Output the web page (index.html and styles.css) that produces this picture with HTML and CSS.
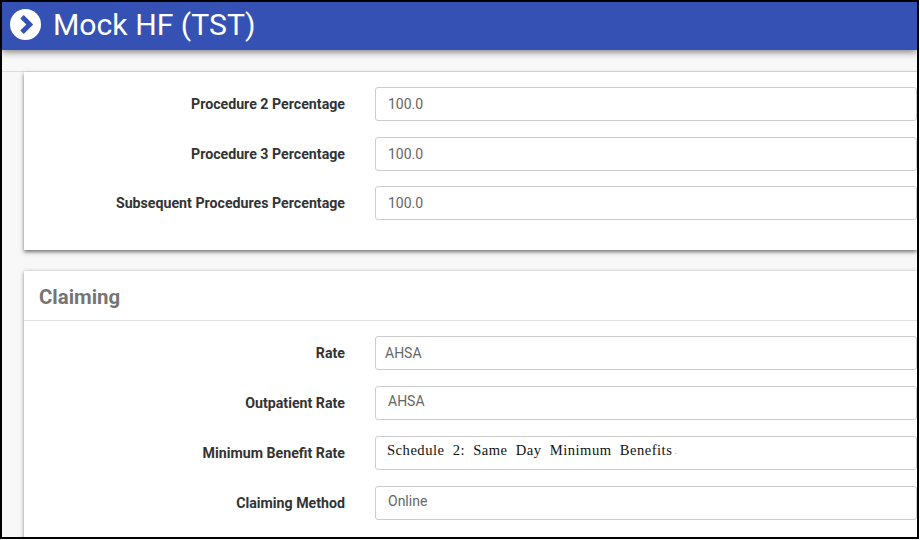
FILE: index.html
```html
<!DOCTYPE html>
<html lang="en">
<head>
<meta charset="utf-8">
<title>Mock HF (TST)</title>
<link rel="stylesheet" href="styles.css">
</head>
<body>
<div class="frame">
  <header class="topbar">
    <svg class="back-icon" viewBox="0 0 32 32" width="31" height="31" aria-hidden="true">
      <circle cx="16" cy="16" r="16" fill="#fff"/>
      <path d="M12.4 8 20.4 16l-8 8" fill="none" stroke="#3551b4" stroke-width="5"/>
    </svg>
    <h1 class="title">Mock HF (TST)</h1>
  </header>
  <div class="strip"></div>
  <main class="content">
    <section class="card card-first">
      <div class="row"><label class="label">Procedure 2 Percentage</label><div class="field">100.0</div></div>
      <div class="row"><label class="label">Procedure 3 Percentage</label><div class="field">100.0</div></div>
      <div class="row"><label class="label">Subsequent Procedures Percentage</label><div class="field">100.0</div></div>
    </section>
    <section class="card card-second">
      <h2 class="card-title">Claiming</h2>
      <div class="row row-wide"><label class="label">Rate</label><div class="field field-inset">AHSA</div></div>
      <div class="row row-wide"><label class="label">Outpatient Rate</label><div class="field field-high">AHSA</div></div>
      <div class="row row-wide"><label class="label">Minimum Benefit Rate</label><div class="field field-serif"><span class="serif-text">Schedule 2: Same Day Minimum Benefits</span><span class="dot">.</span></div></div>
      <div class="row row-wide"><label class="label">Claiming Method</label><div class="field field-high">Online</div></div>
    </section>
  </main>
</div>
</body>
</html>
```
FILE: styles.css
```css
* { box-sizing: border-box; }
html, body { margin: 0; padding: 0; background: #fff; }
.frame {
  width: 919px;
  height: 539px;
  border: 2px solid #000;
  overflow: hidden;
  background: #f8f8f8;
  font-family: Roboto, "Liberation Sans", sans-serif;
  display: flex;
  flex-direction: column;
}
.topbar {
  height: 48px;
  flex: none;
  background: #3551b4;
  display: flex;
  align-items: center;
  gap: 12px;
  padding: 0 0 4px 8px;
  box-shadow: 0 2px 7px rgba(0,0,0,.5);
  position: relative;
}
.back-icon { flex: none; }
.title { margin: 0; font-size: 30.2px; font-weight: 400; color: #fff; }
.strip { height: 22px; flex: none; border-bottom: 1px solid #dcdcdc; }
.content { padding-left: 22px; }
.card {
  background: #fff;
  box-shadow: 0 1px 4px rgba(0,0,0,.45);
}
.card-first { height: 178px; padding-top: 15px; box-shadow: 0 2px 4px rgba(0,0,0,.55); }
.card-second { margin-top: 21px; height: 280px; }
.card-title {
  margin: 0 0 15px;
  height: 50px;
  line-height: 52px;
  padding-left: 15px;
  font-size: 20.4px;
  font-weight: 700;
  color: #757575;
  border-bottom: 1px solid #e2e2e2;
}
.row { display: flex; align-items: center; height: 34px; margin-bottom: 15.6px; }
.row-wide { margin-bottom: 16px; }
.label {
  width: 321px;
  text-align: right;
  font-size: 14.2px;
  font-weight: 700;
  color: #333;
}
.field {
  margin-left: 30px;
  flex: 1;
  height: 34px;
  border: 1px solid #ccc;
  border-radius: 3px;
  background: #fff;
  padding: 0 12px;
  line-height: 32px;
  font-size: 14px;
  color: #666;
}
.field-inset { padding-left: 9px; }
.field-high { line-height: 28px; }
.field-serif {
  font-family: "Liberation Serif", serif;
  color: #111;
  line-height: 27px;
  padding-left: 11px;
  display: flex;
}
.serif-text {
  flex: none;
  white-space: nowrap;
  font-size: 14.6px;
  word-spacing: 4px;
  letter-spacing: .5px;
}
.dot { font-size: 9px; color: #888; margin-left: 2px; line-height: 29px; }
```
